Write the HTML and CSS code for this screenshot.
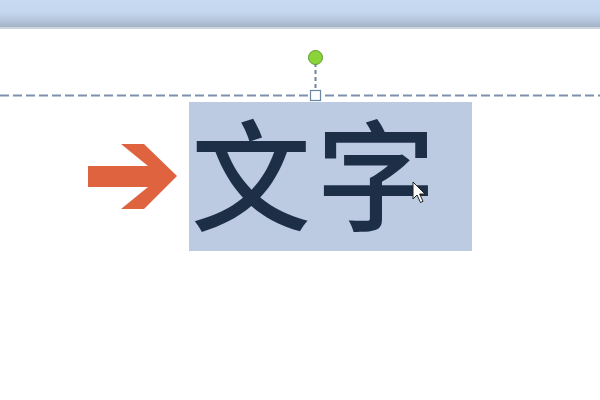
FILE: index.html
```html
<!DOCTYPE html>
<html lang="zh">
<head>
<meta charset="utf-8">
<link rel="stylesheet" href="styles.css">
</head>
<body>
<div class="ribbon"></div>
<div class="stage">
  <svg class="guide" width="600" height="80" viewBox="0 0 600 80">
    <line x1="0" y1="66.5" x2="600" y2="66.5" stroke="#7b91ac" stroke-width="2" stroke-dasharray="9 4"/>
    <line x1="315.5" y1="34" x2="315.5" y2="62" stroke="#6d84a0" stroke-width="2" stroke-dasharray="4 3"/>
    <circle cx="315.5" cy="28.5" r="7" fill="#8ad43a" stroke="#5e9a2a" stroke-width="1"/>
    <rect x="310.5" y="61.5" width="10" height="10" fill="#fff" stroke="#6a85a6" stroke-width="1.2"/>
  </svg>
  <div class="row">
    <svg class="arrow" width="90" height="66" viewBox="0 0 90 66">
      <polygon points="0,22 60,22 33,0 56,0 89,32 56,65 33,65 60,43 0,43" fill="#e06340"/>
    </svg>
    <div class="textbox">文字</div>
  </div>
  <svg class="cursor" width="16" height="24" viewBox="0 0 16 24">
    <path d="M1,1 L1,18 L5,14 L8.5,21.5 L11,20.3 L7.6,13 L13,13 Z" fill="#fff" stroke="#222" stroke-width="1" stroke-linejoin="round"/>
  </svg>
</div>
</body>
</html>
```
FILE: styles.css
```css
html, body {
  margin: 0;
  padding: 0;
  background: #fff;
  width: 600px;
  height: 400px;
  overflow: hidden;
}
.ribbon {
  height: 27px;
  background: linear-gradient(to bottom, #c7daf1 0%, #c4d7ee 45%, #b5c6dc 75%, #a3b2c6 100%);
  border-bottom: 2px solid #c9d6de;
}
.stage {
  position: relative;
  height: 371px;
}
.guide {
  position: absolute;
  left: 0;
  top: 0;
  display: block;
}
.row {
  display: flex;
  align-items: center;
  padding-top: 73px;
  padding-left: 88px;
}
.arrow {
  display: block;
  flex: none;
  margin-right: 11px;
}
.textbox {
  width: 283px;
  height: 149px;
  box-sizing: border-box;
  background: #bccbe2;
  color: #1d2f47;
  font-family: "Noto Sans CJK SC", "Noto Sans CJK JP", sans-serif;
  font-weight: 500;
  font-size: 120px;
  line-height: 136px;
  letter-spacing: 5px;
  padding-left: 2px;
  white-space: nowrap;
}
.cursor {
  position: absolute;
  left: 412px;
  top: 152px;
}
```
